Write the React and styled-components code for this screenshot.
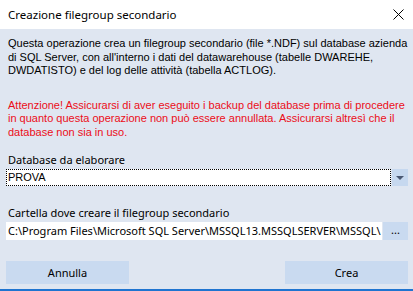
import React from 'react';
import styled, { createGlobalStyle } from 'styled-components';

const GlobalStyle = createGlobalStyle`
  html, body {
    margin: 0;
    padding: 0;
    background: #ffffff;
  }
`;

const Window = styled.div`
  width: 413px;
  height: 291px;
  display: flex;
  flex-direction: column;
  box-sizing: border-box;
  border-bottom: 2px solid #1f74d0;
  overflow: hidden;
`;

const TitleBar = styled.div`
  height: 29px;
  flex: none;
  display: flex;
  align-items: center;
  justify-content: space-between;
  padding: 0 9px 0 8px;
  background: #ffffff;
  font-family: 'Noto Sans', 'Open Sans', sans-serif;
  font-size: 11.5px;
  color: #000;
`;

const CloseButton = styled.div`
  width: 12px;
  height: 12px;
  display: flex;
  align-items: center;
  justify-content: center;
`;

const Body = styled.div`
  flex: 1;
  background: #dfe6f1;
  padding: 8px 5px 0 6px;
  display: flex;
  flex-direction: column;
`;

const Info = styled.p`
  margin: ${({ $warning }) => ($warning ? '21px 0 0 2px' : '0 0 0 2px')};
  font-family: 'Liberation Sans', Arial, sans-serif;
  font-size: 11px;
  line-height: 13.5px;
  color: ${({ $warning }) => ($warning ? '#ec0d18' : '#000')};
`;

const Label = styled.div`
  font-family: 'Noto Sans', 'Open Sans', sans-serif;
  font-size: 11px;
  line-height: 14px;
  margin: ${({ $top }) => $top}px 0 2px 2px;
`;

const Field = styled.div`
  display: flex;
  height: ${({ $h }) => $h}px;
  gap: 1px;
`;

const SelectBox = styled.div`
  flex: 1;
  background: #fff;
  border: 1px dotted #000;
  box-sizing: border-box;
  font-family: 'Liberation Sans', Arial, sans-serif;
  font-size: 11px;
  line-height: 15px;
  padding-left: 1px;
`;

const ArrowButton = styled.div`
  width: 16px;
  background: #c6d8ef;
  display: flex;
  align-items: center;
  justify-content: center;
`;

const PathInput = styled.div`
  flex: 1;
  background: #fff;
  font-family: 'Noto Sans', 'Open Sans', sans-serif;
  font-size: 11px;
  line-height: 18px;
  padding-left: 2px;
  white-space: nowrap;
  overflow: hidden;
`;

const BrowseButton = styled.div`
  width: 25px;
  background: #c9daf0;
  font-family: 'Noto Sans', 'Open Sans', sans-serif;
  font-size: 11px;
  text-align: center;
  line-height: 16px;
`;

const Footer = styled.div`
  display: flex;
  justify-content: space-between;
  margin-top: auto;
  margin-bottom: 5px;
`;

const Button = styled.div`
  width: 123px;
  height: 23px;
  background: #c9daf0;
  font-family: 'Noto Sans', 'Open Sans', sans-serif;
  font-size: 11px;
  display: flex;
  align-items: center;
  justify-content: center;
`;

export default function App() {
  return (
    <>
      <GlobalStyle />
      <Window>
        <TitleBar>
          <span>Creazione filegroup secondario</span>
          <CloseButton>
            <svg width="11" height="11" viewBox="0 0 11 11">
              <path d="M0.5 0.5 L10.5 10.5 M10.5 0.5 L0.5 10.5" stroke="#000" strokeWidth="1" />
            </svg>
          </CloseButton>
        </TitleBar>
        <Body>
          <Info>
            Questa operazione crea un filegroup secondario (file *.NDF) sul database azienda di SQL
            Server, con all'interno i dati del datawarehouse (tabelle DWAREHE, DWDATISTO) e del log
            delle attività (tabella ACTLOG).
          </Info>
          <Info $warning>
            Attenzione! Assicurarsi di aver eseguito i backup del database prima di procedere in
            quanto questa operazione non può essere annullata. Assicurarsi altresì che il database
            non sia in uso.
          </Info>
          <Label $top={14}>Database da elaborare</Label>
          <Field $h={17}>
            <SelectBox>PROVA</SelectBox>
            <ArrowButton>
              <svg width="8" height="4" viewBox="0 0 8 4">
                <path d="M0 0 H8 L4 4 Z" fill="#4a5873" />
              </svg>
            </ArrowButton>
          </Field>
          <Label $top={20}>Cartella dove creare il filegroup secondario</Label>
          <Field $h={18}>
            <PathInput>C:\Program Files\Microsoft SQL Server\MSSQL13.MSSQLSERVER\MSSQL\</PathInput>
            <BrowseButton>...</BrowseButton>
          </Field>
          <Footer>
            <Button>Annulla</Button>
            <Button>Crea</Button>
          </Footer>
        </Body>
      </Window>
    </>
  );
}
